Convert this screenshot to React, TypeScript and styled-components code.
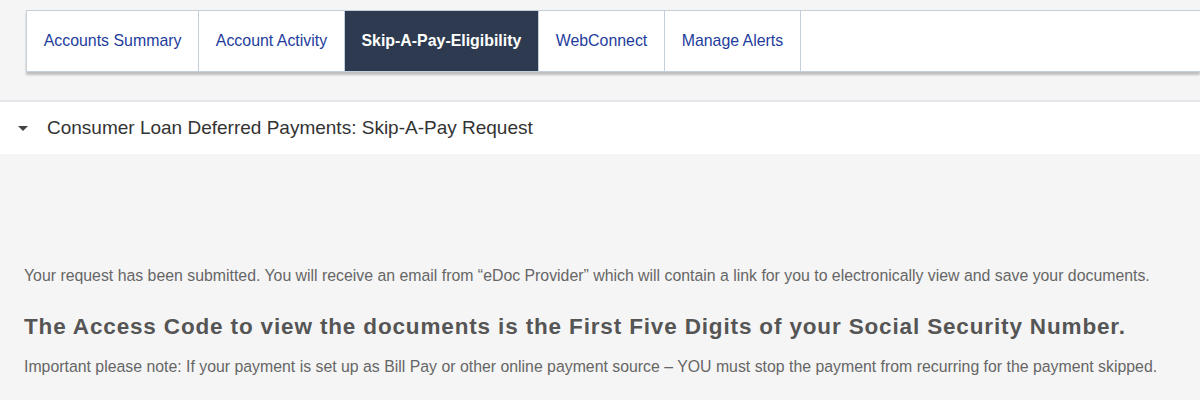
import React from 'react';
import styled, { createGlobalStyle } from 'styled-components';

const GlobalStyle = createGlobalStyle`
  body {
    margin: 0;
    background: #f5f5f5;
    font-family: Arial, 'Liberation Sans', sans-serif;
  }
`;

const Page = styled.div`
  width: 1200px;
  height: 400px;
  overflow: hidden;
  background: #f5f5f5;
`;

const TabBar = styled.nav`
  display: flex;
  margin: 10px 0 0 26px;
  height: 60px;
  background: #fff;
  border: 1px solid #c3d0dc;
  border-right: none;
  box-shadow: 0 3px 2px rgba(0, 0, 0, 0.22);
`;

const Tab = styled.a<{ active?: boolean }>`
  display: flex;
  align-items: center;
  padding: 0 16.7px;
  font-size: 15.9px;
  font-weight: ${(p) => (p.active ? 'bold' : 'normal')};
  color: ${(p) => (p.active ? '#fff' : '#1e3c9c')};
  background: ${(p) => (p.active ? '#2d3a50' : 'transparent')};
  border-right: 1px solid #c3d0dc;
  text-decoration: none;
  white-space: nowrap;
`;

const Section = styled.section`
  margin-top: 28px;
  border-top: 2px solid #e3e6ea;
`;

const SectionHeader = styled.div`
  display: flex;
  align-items: center;
  gap: 19px;
  height: 52px;
  padding-left: 18px;
  background: #fff;
  font-size: 19px;
  color: #333;
`;

const Caret = styled.span`
  width: 0;
  height: 0;
  border-left: 5px solid transparent;
  border-right: 5px solid transparent;
  border-top: 5px solid #444;
`;

const Content = styled.div`
  padding: 112px 24px 0;
  color: #666;
`;

const Text = styled.p`
  margin: 0;
  font-size: 15.85px;
  line-height: 20px;
  white-space: nowrap;
`;

const Notice = styled.h3`
  margin: 27px 0 16px;
  font-size: 22.5px;
  line-height: 28px;
  letter-spacing: 0.85px;
  font-weight: bold;
  color: #555;
  white-space: nowrap;
`;

const tabs = ['Accounts Summary', 'Account Activity', 'Skip-A-Pay-Eligibility', 'WebConnect', 'Manage Alerts'];

export default function App() {
  return (
    <Page>
      <GlobalStyle />
      <TabBar>
        {tabs.map((t) => (
          <Tab key={t} active={t === 'Skip-A-Pay-Eligibility'}>
            {t}
          </Tab>
        ))}
      </TabBar>
      <Section>
        <SectionHeader>
          <Caret />
          Consumer Loan Deferred Payments: Skip-A-Pay Request
        </SectionHeader>
        <Content>
          <Text>
            Your request has been submitted. You will receive an email from “eDoc Provider” which will contain a link for
            you to electronically view and save your documents.
          </Text>
          <Notice>The Access Code to view the documents is the First Five Digits of your Social Security Number.</Notice>
          <Text>
            Important please note: If your payment is set up as Bill Pay or other online payment source – YOU must stop
            the payment from recurring for the payment skipped.
          </Text>
        </Content>
      </Section>
    </Page>
  );
}
